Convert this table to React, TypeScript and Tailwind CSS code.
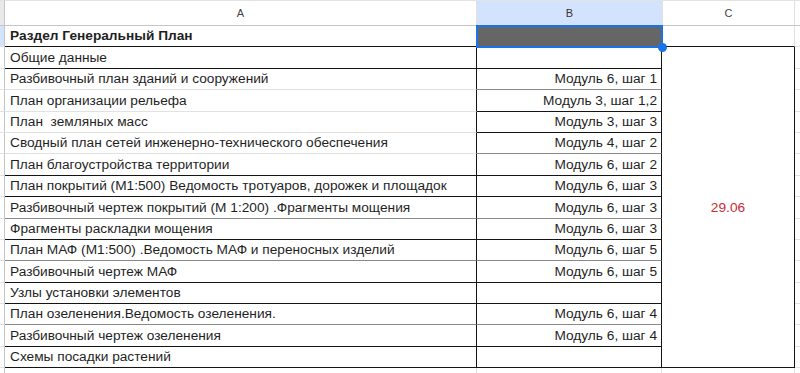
import React from 'react';

type Line = 'k' | 'g' | 'l';

interface Row {
  a: string;
  b?: string;
  bold?: boolean;
  aLine: Line;
  bLine: Line;
}

// bottom border colours, as they show up in the screenshot
const LINE: Record<Line, string> = {
  k: 'border-b-[#141414]',
  g: 'border-b-[#8a8a8a]',
  l: 'border-b-[#e1e1e1]',
};

const ROWS: Row[] = [
  { a: 'Раздел Генеральный План', bold: true, aLine: 'k', bLine: 'k' },
  { a: 'Общие данные', aLine: 'k', bLine: 'k' },
  { a: 'Разбивочный план зданий и сооружений', b: 'Модуль 6, шаг 1', aLine: 'l', bLine: 'g' },
  { a: 'План организации рельефа', b: 'Модуль 3, шаг 1,2', aLine: 'l', bLine: 'k' },
  { a: 'План  земляных масс', b: 'Модуль 3, шаг 3', aLine: 'l', bLine: 'k' },
  { a: 'Сводный план сетей инженерно-технического обеспечения', b: 'Модуль 4, шаг 2', aLine: 'l', bLine: 'g' },
  { a: 'План благоустройства территории', b: 'Модуль 6, шаг 2', aLine: 'k', bLine: 'k' },
  { a: 'План покрытий (М1:500) Ведомость тротуаров, дорожек и площадок', b: 'Модуль 6, шаг 3', aLine: 'k', bLine: 'k' },
  { a: 'Разбивочный чертеж покрытий (М 1:200) .Фрагменты мощения', b: 'Модуль 6, шаг 3', aLine: 'g', bLine: 'g' },
  { a: 'Фрагменты раскладки мощения', b: 'Модуль 6, шаг 3', aLine: 'k', bLine: 'k' },
  { a: 'План МАФ (М1:500) .Ведомость МАФ и переносных изделий', b: 'Модуль 6, шаг 5', aLine: 'g', bLine: 'g' },
  { a: 'Разбивочный чертеж МАФ', b: 'Модуль 6, шаг 5', aLine: 'k', bLine: 'k' },
  { a: 'Узлы установки элементов', aLine: 'k', bLine: 'k' },
  { a: 'План озеленения.Ведомость озеленения.', b: 'Модуль 6, шаг 4', aLine: 'g', bLine: 'g' },
  { a: 'Разбивочный чертеж озеленения', b: 'Модуль 6, шаг 4', aLine: 'k', bLine: 'k' },
  { a: 'Схемы посадки растений', aLine: 'k', bLine: 'k' },
];

const App: React.FC = () => {
  return (
    <div
      className="h-[373px] w-[800px] overflow-hidden bg-white text-[13.7px] leading-[16px] text-[#1f1f1f]"
      style={{ fontFamily: '"Liberation Sans", Arial, sans-serif' }}
    >
      <div className="grid grid-cols-[5px_472px_185px_133px_1fr] grid-rows-[26px_repeat(16,21.4px)_22px]">
        {/* column headers */}
        <div className="border-r border-b border-t border-r-[#c4c7c5] border-b-[#c4c7c5] border-t-[#e3e3e3] bg-[#e9e9e9]" />
        <div className="flex items-center justify-center border-r border-b border-t border-r-[#e1e1e1] border-b-[#c4c7c5] border-t-[#e3e3e3] text-[11px] text-[#444]">
          A
        </div>
        <div className="flex items-center justify-center border-b border-t border-b-[#c4c7c5] border-t-[#e3e3e3] bg-[#d3e3fd] text-[11px] text-[#333]">
          B
        </div>
        <div className="flex items-center justify-center border-r border-b border-t border-l border-l-[#e1e1e1] border-r-[#e1e1e1] border-b-[#c4c7c5] border-t-[#e3e3e3] text-[11px] text-[#444]">
          C
        </div>
        <div className="border-b border-t border-b-[#c4c7c5] border-t-[#e3e3e3]" />

        {ROWS.map((row, i) => (
          <React.Fragment key={i}>
            <div
              className={`border-r border-b border-r-[#c4c7c5] border-b-[#e1e1e1] ${
                i === 0 ? 'bg-[#d3e3fd]' : 'bg-white'
              }`}
            />
            <div
              className={`flex items-end overflow-hidden whitespace-pre border-r border-b border-r-[#141414] pb-[2px] pl-[5px] ${
                LINE[row.aLine]
              } ${row.bold ? 'font-bold' : ''}`}
            >
              {row.a}
            </div>
            {i === 0 ? (
              <div className="relative bg-[#666666]">
                <div className="absolute -top-px -left-px -right-px -bottom-px border-2 border-[#1a73e8]" />
                <div className="absolute -bottom-[5px] -right-[5px] z-10 h-[9px] w-[9px] rounded-full bg-[#1a73e8]" />
              </div>
            ) : (
              <div
                className={`flex items-end justify-end whitespace-pre border-r border-b border-r-[#141414] pb-[2px] pr-[4px] ${
                  LINE[row.bLine]
                }`}
              >
                {row.b ?? ''}
              </div>
            )}
            {i === 0 && <div className="border-r border-b border-r-[#e1e1e1] border-b-[#141414]" />}
            {i === 1 && (
              <div className="row-span-15 flex items-center justify-center border-r border-b border-r-[#141414] border-b-[#141414] pt-px text-[#cc2b36]">
                29.06
              </div>
            )}
            <div className="border-b border-b-[#e1e1e1]" />
          </React.Fragment>
        ))}

        {/* partial row below */}
        <div className="border-r border-r-[#c4c7c5]" />
        <div className="border-r border-r-[#e1e1e1]" />
        <div className="border-r border-r-[#e1e1e1]" />
        <div className="border-r border-r-[#e1e1e1]" />
        <div />
      </div>
    </div>
  );
};

export default App;
